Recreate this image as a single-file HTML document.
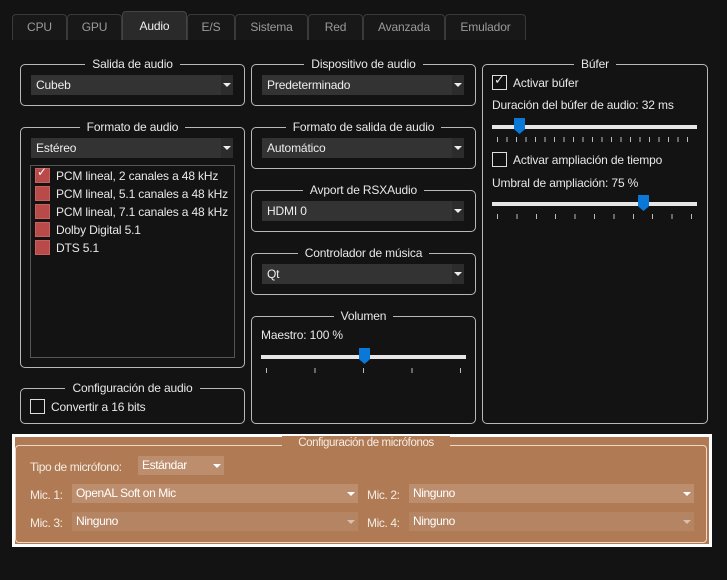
<!DOCTYPE html>
<html><head><meta charset="utf-8"><style>
*{box-sizing:border-box;margin:0;padding:0}
body{width:727px;height:580px;background:#131313;font-family:"Liberation Sans",sans-serif;font-size:12px;letter-spacing:-0.15px;color:#e8e8e8;position:relative;overflow:hidden}
.a{position:absolute}
.tab{position:absolute;top:14px;height:26px;border:1px solid #3a3a3a;border-bottom:none;border-radius:4px 4px 0 0;background:#181818;color:#9a9a9a;text-align:center;line-height:25px;font-size:12px}
.tab.sel{top:11px;height:29px;background:#2a2a2a;color:#f0f0f0;line-height:28px;border-color:#444}
.gb{position:absolute;border:1px solid #b8b8b8;border-radius:5px}
.gt{position:absolute;top:-9px;left:0;right:0;text-align:center;line-height:16px}
.gt span{background:#131313;padding:0 7px}
.cb{position:absolute;height:20px;background:#333;line-height:20px;padding-left:5px;color:#eee}
.cb:after{content:"";position:absolute;right:0;top:0;width:12px;height:20px;background:#2c2c2c}
.cb:before{content:"";position:absolute;right:2px;top:8px;border-left:4px solid transparent;border-right:4px solid transparent;border-top:4px solid #eee;z-index:1}
.chk{position:absolute;width:15px;height:15px;border:1px solid #ddd;background:#111}
.red{position:absolute;width:15px;height:15px;background:#b94a4a;border:1px solid #c86060}
.track{position:absolute;height:4px;background:#e6e6e6}
.h{position:absolute;width:11px;height:16px;background:#0a78d7;clip-path:polygon(0 0,100% 0,100% 70%,50% 100%,0 70%)}
.ticks{position:absolute;height:5px}
.m{position:absolute;color:#f4ece4;letter-spacing:-0.4px}
.mc{position:absolute;height:19px;background:#bd8e6d;line-height:19px;padding-left:4px;color:#fff;letter-spacing:-0.4px}
.mc:before{content:"";position:absolute;right:3px;top:8px;border-left:4px solid transparent;border-right:4px solid transparent;border-top:4px solid #fff}
.mc.d{background:#b58563}
.mc.d:before{border-top-color:#d8c0b0}
</style></head><body>
<div class="tab" style="left:12px;width:55px">CPU</div>
<div class="tab" style="left:67px;width:55px">GPU</div>
<div class="tab sel" style="left:122px;width:65px">Audio</div>
<div class="tab" style="left:187px;width:48px">E/S</div>
<div class="tab" style="left:235px;width:73px">Sistema</div>
<div class="tab" style="left:308px;width:55px">Red</div>
<div class="tab" style="left:363px;width:82px">Avanzada</div>
<div class="tab" style="left:445px;width:81px">Emulador</div>

<div class="gb" style="left:20px;top:64px;width:225px;height:42px"><div class="gt"><span>Salida de audio</span></div></div>
<div class="cb" style="left:31px;top:75px;width:202px">Cubeb</div>
<div class="gb" style="left:20px;top:127px;width:225px;height:241px"><div class="gt"><span>Formato de audio</span></div></div>
<div class="cb" style="left:31px;top:138px;width:202px">Estéreo</div>
<div class="a" style="left:30px;top:165px;width:205px;height:193px;border:1px solid #555"></div>
<div class="red" style="left:35px;top:168px"></div><div class="a" style="left:37px;top:165px;color:#fff;font-size:12px">✓</div>
<div class="a" style="left:56px;top:169px">PCM lineal, 2 canales a 48 kHz</div>
<div class="red" style="left:35px;top:186px"></div><div class="a" style="left:56px;top:187px">PCM lineal, 5.1 canales a 48 kHz</div>
<div class="red" style="left:35px;top:204px"></div><div class="a" style="left:56px;top:205px">PCM lineal, 7.1 canales a 48 kHz</div>
<div class="red" style="left:35px;top:222px"></div><div class="a" style="left:56px;top:223px">Dolby Digital 5.1</div>
<div class="red" style="left:35px;top:240px"></div><div class="a" style="left:56px;top:241px">DTS 5.1</div>
<div class="gb" style="left:20px;top:388px;width:225px;height:36px"><div class="gt"><span>Configuración de audio</span></div></div>
<div class="chk" style="left:30px;top:399px"></div><div class="a" style="left:51px;top:400px">Convertir a 16 bits</div>

<div class="gb" style="left:251px;top:64px;width:225px;height:42px"><div class="gt"><span>Dispositivo de audio</span></div></div>
<div class="cb" style="left:262px;top:75px;width:202px">Predeterminado</div>
<div class="gb" style="left:251px;top:127px;width:225px;height:42px"><div class="gt"><span>Formato de salida de audio</span></div></div>
<div class="cb" style="left:262px;top:138px;width:202px">Automático</div>
<div class="gb" style="left:251px;top:190px;width:225px;height:42px"><div class="gt"><span>Avport de RSXAudio</span></div></div>
<div class="cb" style="left:262px;top:201px;width:202px">HDMI 0</div>
<div class="gb" style="left:251px;top:253px;width:225px;height:42px"><div class="gt"><span>Controlador de música</span></div></div>
<div class="cb" style="left:262px;top:264px;width:202px">Qt</div>
<div class="gb" style="left:251px;top:316px;width:225px;height:108px"><div class="gt"><span>Volumen</span></div></div>
<div class="a" style="left:261px;top:328px">Maestro: 100 %</div>
<div class="track" style="left:261px;top:355px;width:205px"></div>
<div class="h" style="left:359px;top:348px"></div>
<div class="ticks" style="left:266px;top:368px;width:200px;background:repeating-linear-gradient(90deg,#bbb 0 1px,transparent 1px 48.5px)"></div>

<div class="gb" style="left:482px;top:64px;width:226px;height:360px"><div class="gt"><span>Búfer</span></div></div>
<div class="chk" style="left:492px;top:75px"></div><div class="a" style="left:494px;top:72px;font-size:13px">✓</div>
<div class="a" style="left:513px;top:76px">Activar búfer</div>
<div class="a" style="left:492px;top:98px">Duración del búfer de audio: 32 ms</div>
<div class="track" style="left:492px;top:125px;width:205px"></div>
<div class="h" style="left:514px;top:118px"></div>
<div class="ticks" style="left:497px;top:137px;width:192px;background:repeating-linear-gradient(90deg,#bbb 0 1px,transparent 1px 9.5px)"></div>
<div class="chk" style="left:492px;top:152px"></div>
<div class="a" style="left:513px;top:153px">Activar ampliación de tiempo</div>
<div class="a" style="left:492px;top:176px">Umbral de ampliación: 75 %</div>
<div class="track" style="left:492px;top:202px;width:205px"></div>
<div class="h" style="left:638px;top:195px"></div>
<div class="ticks" style="left:497px;top:214px;width:196px;background:repeating-linear-gradient(90deg,#bbb 0 1px,transparent 1px 19.4px)"></div>

<div class="a" style="left:12px;top:434px;width:700px;height:113px;background:#fff"></div>
<div class="a" style="left:15px;top:437px;width:694px;height:107px;background:#b07b54"></div>
<div class="a" style="left:15px;top:445px;width:692px;height:98px;border:1px solid #ecd8c8;border-radius:4px"></div>
<div class="a" style="left:282px;top:436px;width:168px;text-align:center;background:#b07b54;color:#f6ece4;font-size:11.5px;line-height:14px;letter-spacing:-0.4px">Configuración de micrófonos</div>
<div class="m" style="left:30px;top:460px">Tipo de micrófono:</div>
<div class="mc" style="left:138px;top:456px;width:86px">Estándar</div>
<div class="m" style="left:30px;top:488px">Mic. 1:</div>
<div class="mc" style="left:72px;top:484px;width:286px">OpenAL Soft on Mic</div>
<div class="m" style="left:367px;top:488px">Mic. 2:</div>
<div class="mc" style="left:409px;top:484px;width:285px">Ninguno</div>
<div class="m" style="left:30px;top:516px">Mic. 3:</div>
<div class="mc d" style="left:72px;top:512px;width:286px">Ninguno</div>
<div class="m" style="left:367px;top:516px">Mic. 4:</div>
<div class="mc d" style="left:409px;top:512px;width:285px">Ninguno</div>
</body></html>
